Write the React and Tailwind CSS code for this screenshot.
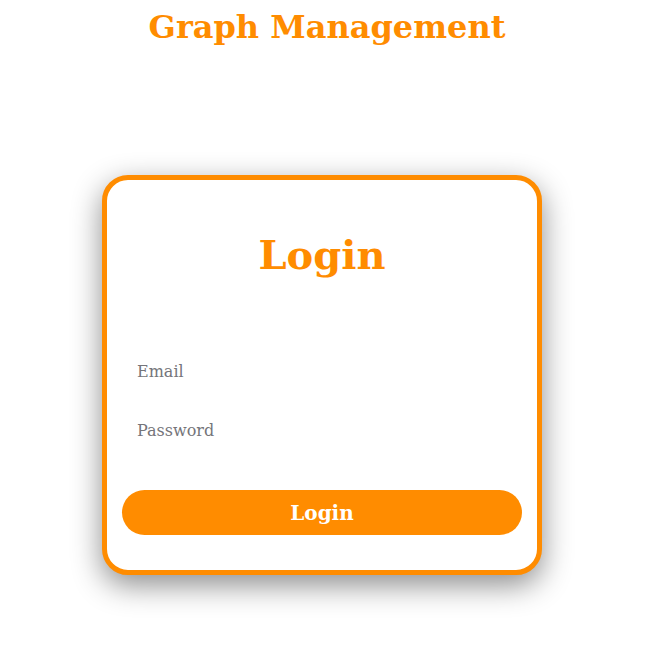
import React from 'react';

const serif = { fontFamily: '"DejaVu Serif", serif' };

const App = () => {
  return (
    <div className="min-h-[649px] w-full bg-white" style={serif}>
      <h1 className="pt-[8px] pl-[4px] text-center text-[32px] leading-[38px] font-bold text-[#ff8c00]">
        Graph Management
      </h1>

      <div className="pt-[129px]">
        <div className="ml-[102px] w-[440px] h-[400px] rounded-[26px] border-[5px] border-[#ff8c00] bg-white shadow-[0_10px_30px_rgba(0,0,0,0.45)] flex flex-col">
          <h2 className="pt-[51px] text-center text-[40px] leading-[48px] font-bold text-[#ff8c00]">
            Login
          </h2>

          <form className="flex flex-col pt-[72px] px-[15px]" onSubmit={(e) => e.preventDefault()}>
            <input
              type="email"
              placeholder="Email"
              className="h-[40px] px-[15px] text-[16px] text-gray-700 placeholder:text-[#75757a] outline-none bg-transparent"
              style={serif}
            />
            <input
              type="password"
              placeholder="Password"
              className="mt-[19px] h-[40px] px-[15px] text-[16px] text-gray-700 placeholder:text-[#75757a] outline-none bg-transparent"
              style={serif}
            />
            <button
              type="submit"
              className="mt-[40px] h-[45px] rounded-[23px] bg-[#ff8c00] text-white text-[20px] font-bold"
              style={serif}
            >
              Login
            </button>
          </form>
        </div>
      </div>
    </div>
  );
};

export default App;
